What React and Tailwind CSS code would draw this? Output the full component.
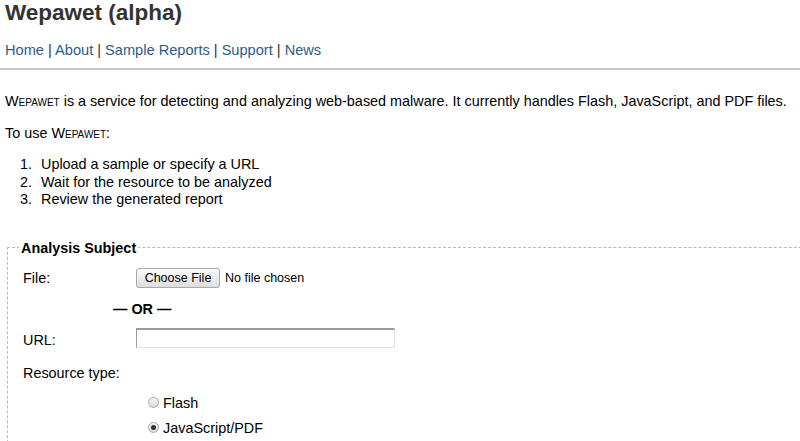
import React from 'react';

const SmallCaps = ({ children }) => (
    <span className="[font-variant:small-caps]">{children}</span>
);

const Radio = ({ checked }) => (
    <span className="inline-flex items-center justify-center w-[11px] h-[11px] rounded-full border border-[#a8a8a8] bg-gradient-to-b from-[#f4f4f4] to-[#dcdcdc]">
        {checked && <span className="w-[5px] h-[5px] rounded-full bg-[#333]" />}
    </span>
);

const steps = [
    'Upload a sample or specify a URL',
    'Wait for the resource to be analyzed',
    'Review the generated report',
];

const App = () => {
    const links = ['Home', 'About', 'Sample Reports', 'Support', 'News'];

    return (
        <div className="h-[441px] overflow-hidden bg-white text-black text-[14.4px] font-['Liberation_Sans',Arial,sans-serif]">
            <div className="px-[5px]">
                <h1 className="text-[22.5px] font-bold text-[#333] leading-[25px]">Wepawet (alpha)</h1>
                <div className="mt-[17px] leading-[16px] text-[14.6px]">
                    {links.map((l, i) => (
                        <span key={l}>
                            <a href="#" className="text-[#2a5d8c]">{l}</a>
                            {i < links.length - 1 && <span className="text-[#333]"> | </span>}
                        </span>
                    ))}
                </div>
            </div>
            <div className="mt-[10px] h-[2px] bg-[#c8c8c8]" />

            <div className="px-[5px] pt-[23px]">
                <p className="leading-[16px]">
                    <SmallCaps>Wepawet</SmallCaps> is a service for detecting and analyzing web-based malware. It currently handles Flash, JavaScript, and PDF files.
                </p>
                <p className="mt-[16px] leading-[16px]">
                    To use <SmallCaps>Wepawet</SmallCaps>:
                </p>
                <ol className="mt-[15px]">
                    {steps.map((s, i) => (
                        <li key={s} className="flex leading-[17.5px]">
                            <span className="w-[36px] pl-[15px]">{i + 1}.</span>
                            <span>{s}</span>
                        </li>
                    ))}
                </ol>
            </div>

            <fieldset className="mt-[31px] ml-[7px] w-[900px] border border-dashed border-[#b8b8b8] px-[10px] pb-4">
                <legend className="ml-[1px] px-[2px] font-bold leading-[16px]">Analysis Subject</legend>

                <div className="flex items-center mt-[12px]">
                    <div className="w-[118px] pl-[5px]">File:</div>
                    <div className="flex items-center gap-[5px]">
                        <button className="h-[20px] w-[84px] rounded-[3px] border border-[#a9a9a9] bg-gradient-to-b from-[#fbfbfb] to-[#dedede] text-[12.5px] leading-[18px] text-black">
                            Choose File
                        </button>
                        <span className="text-[12.5px]">No file chosen</span>
                    </div>
                </div>

                <div className="ml-[95px] mt-[12px] font-bold leading-[16px]">— OR —</div>

                <div className="flex items-center mt-[8px]">
                    <div className="w-[118px] pl-[5px] pt-[5px]">URL:</div>
                    <input
                        type="text"
                        className="w-[259px] h-[20px] border border-t-[#9a9a9a] border-l-[#9a9a9a] border-r-[#e2e2e2] border-b-[#e2e2e2] border-t-2 bg-white outline-none"
                    />
                </div>

                <div className="mt-[13px] pl-[5px] leading-[16px]">Resource type:</div>

                <div className="ml-[130px] mt-[14px] flex flex-col gap-[9px]">
                    <label className="flex items-center gap-[4px] leading-[16px]">
                        <Radio />
                        <span>Flash</span>
                    </label>
                    <label className="flex items-center gap-[4px] leading-[16px]">
                        <Radio checked />
                        <span>JavaScript/PDF</span>
                    </label>
                </div>
            </fieldset>
        </div>
    );
};

export default App;
